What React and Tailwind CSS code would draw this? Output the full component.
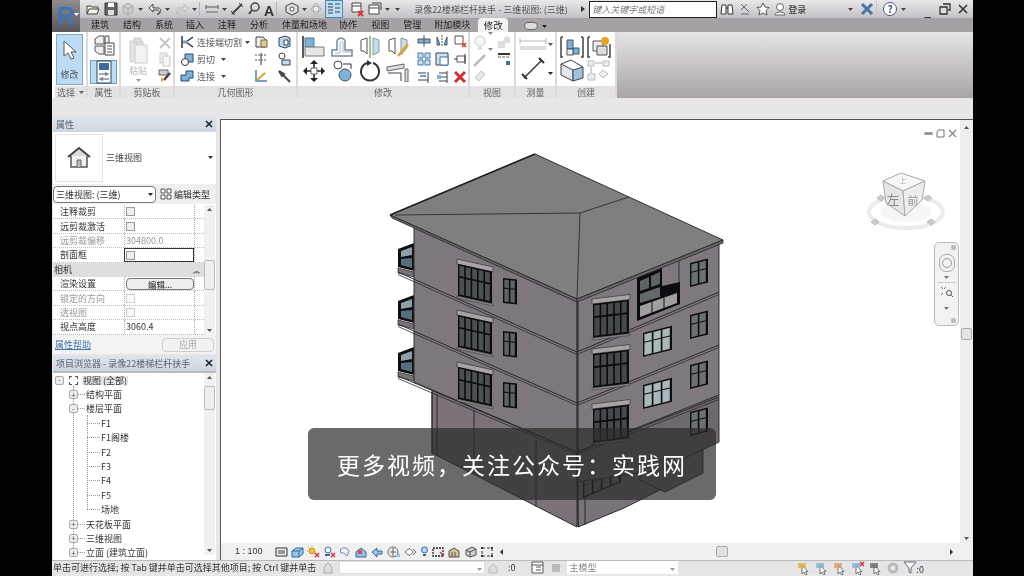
import React from 'react';

const FONT = { fontFamily: '"Noto Sans CJK SC", sans-serif' };

const S = ({ w = 16, h = 16, vb, children, className = '' }) => (
  <svg width={w} height={h} viewBox={vb || `0 0 ${w} ${h}`} className={`shrink-0 ${className}`} fill="none">
    {children}
  </svg>
);

const Caret = ({ c = '#444' }) => (
  <svg width="5" height="3" viewBox="0 0 5 3" className="shrink-0"><path d="M0 0h5L2.5 3z" fill={c} /></svg>
);

const CaretUp = ({ c = '#555' }) => (
  <svg width="5" height="3" viewBox="0 0 5 3" className="shrink-0"><path d="M0 3h5L2.5 0z" fill={c} /></svg>
);

// ---------- small icon drawings
const BLUE = '#7fb2d8', GRY = '#c9c9c9';
const I = {
  folder: <S><path d="M2 13V5h4l1 1h6v2M2 13l2-5h10l-2 5z" fill="#f0eee0" stroke="#444" /></S>,
  save: <S><path d="M2 2h12v12H2z" fill="#666" stroke="#333" /><path d="M5 2h6v4H5z" fill="#fff" /><path d="M5 9h6v5H5z" fill="#ddd" /></S>,
  sync: <S><path d="M8 2l5 3v6l-5 3-5-3V5z" fill="#ccc" stroke="#aaa" /><path d="M3 5l5 3 5-3M8 8v6" stroke="#aaa" /></S>,
  undo: <S><path d="M6 3L2 7l4 4V9h5c2 0 2 4 0 4h-1c5 0 5-6 1-6H6z" fill="#eee" stroke="#444" /></S>,
  redo: <S><path d="M10 3l4 4-4 4V9H5c-2 0-2 4 0 4h1c-5 0-5-6-1-6h5z" fill="#ddd" stroke="#bbb" /></S>,
  measure: <S><path d="M2 6h12M2 11h12" stroke="#999" strokeWidth="2" /><path d="M2 4v4M14 4v4" stroke="#555" /></S>,
  align: <S><path d="M3 13L13 3" stroke="#444" strokeWidth="2" /><path d="M2 10l4 4M10 2l4 4" stroke="#444" /></S>,
  tag: <S><circle cx="9" cy="6" r="4" stroke="#444" strokeWidth="1.5" /><path d="M6 9l-3 4" stroke="#444" strokeWidth="2" /></S>,
  A: <span className="w-4 text-center text-[14px] leading-4 font-bold text-[#333]" style={{ fontFamily: '"Liberation Sans"' }}>A</span>,
  house3d: <S><path d="M8 2l6 3v6l-6 3-6-3V5z" fill="#ddd" stroke="#444" /><circle cx="8" cy="8" r="2" fill="#fff" stroke="#555" /></S>,
  section: <S><path d="M8 2l5 6-5 6-5-6z" fill="#ddd" stroke="#aaa" /><circle cx="8" cy="8" r="3" fill="#eee" stroke="#aaa" /></S>,
  thin: <S><path d="M2 3h5M2 6h5M2 9h5M2 12h5M9 3h5M9 7h5M9 11h5" stroke="#345" /></S>,
  closeWin: <S><path d="M3 2h9v9H3z" fill="#fff" stroke="#444" /><path d="M3 5h9" stroke="#444" /><path d="M9 10l5 5m0-5l-5 5" stroke="#d33" strokeWidth="2" /></S>,
  switchWin: <S><path d="M2 4h10v9H2z" fill="#fff" stroke="#444" /><path d="M2 7h10" stroke="#444" /><path d="M5 2h9v7" stroke="#444" /></S>,
  cursor: <S w={18} h={22}><path d="M3 2v15l4-3 3 6 3-1-3-6h5z" fill="#fff" stroke="#555" /></S>,
  grid2: <S w={22} h={24}><path d="M2 6l4-3h5v8H2zM2 13h9v8H6l-4-3zM12 3h4v8h-4z" fill="#eee" stroke="#555" /><path d="M12 10h9v12h-9z" fill="#fff" stroke="#444" /><path d="M14 13h5M14 16h5M14 19h5" stroke="#456" /></S>,
  propsActive: <S w={20} h={24}><path d="M3 1h14v22H3z" fill="#fff" stroke="#345" /><path d="M5 3h10v7H5z" fill="#3e6ca0" /><path d="M5 14h10M5 19h10" stroke="#456" /><path d="M12 12v4M8 17v4" stroke="#456" /></S>,
  paste: <S w={20} h={28}><path d="M2 5h13v21H2z" fill="#e5e5e5" stroke="#ccc" /><path d="M6 2h7v5H6z" fill="#ddd" stroke="#ccc" /><path d="M7 9h12v18H7z" fill="#f2f2f2" stroke="#ccc" /></S>,
  cut: <S><path d="M3 3l10 10M13 3L3 13" stroke="#c6c6c6" strokeWidth="2" /></S>,
  copy: <S><path d="M3 2h7v10H3z" fill="#eee" stroke="#ccc" /><path d="M6 5h7v10H6z" fill="#f5f5f5" stroke="#ccc" /></S>,
  brush: <S><path d="M2 3h9v5H2z" fill="#ccc" stroke="#666" /><path d="M13 6l-6 7" stroke="#444" strokeWidth="2.5" /><path d="M4 10l3 3-3 2z" fill="#d9a428" /></S>,
  joinCut: <S w={14} h={14}><path d="M2 1v12" stroke="#333" strokeWidth="1.5" /><path d="M13 2L6 7l7 5" stroke="#333" strokeWidth="1.5" /><path d="M3 7h5" stroke="#6a9cc4" strokeWidth="3" /></S>,
  cutGeo: <S w={14} h={14}><path d="M5 2h8v8H5z" fill={BLUE} stroke="#346" /><circle cx="5" cy="10" r="3.5" fill="#fff" stroke="#333" /></S>,
  joinGeo: <S w={14} h={14}><path d="M6 2h7v7H9v3H1V6h5z" fill={BLUE} stroke="#346" /></S>,
  g1: <S w={14} h={14}><path d="M2 2h7l3 3v7H2z" fill="#eee" stroke="#444" /><path d="M7 5h6v7H7z" fill="#e8c88a" stroke="#765" /></S>,
  g2: <S w={14} h={14}><path d="M2 3l6-2 5 2v8l-5 2-6-2z" fill="#bcd6ea" stroke="#345" /><path d="M7 5h4v5H7z" fill="#fff" stroke="#345" /></S>,
  g3: <S w={14} h={14}><path d="M1 3h12M1 8h12" stroke="#555" strokeDasharray="2 1" /><path d="M7 1v12" stroke="#333" /></S>,
  g4: <S w={14} h={14}><circle cx="5" cy="4" r="3" fill="#fff" stroke="#444" /><path d="M5 8h8v5H5z" fill="#cde" stroke="#345" /></S>,
  g5: <S w={14} h={14}><path d="M2 1v11h11" stroke="#4c80b0" strokeWidth="1.5" /><path d="M3 11l8-7" stroke="#d9a428" strokeWidth="2" /></S>,
  g6: <S w={14} h={14}><path d="M2 2l5 3-2 2zM6 6l7 7" stroke="#444" strokeWidth="2" /></S>,
  alignBig: <S w={24} h={22}><path d="M1 0v22" stroke="#222" strokeWidth="1.5" /><path d="M3 2h9v9H3z" fill={BLUE} stroke="#578" /><path d="M3 11h19v9H3z" fill="#e6e6e6" stroke="#777" /></S>,
  offset: <S w={24} h={22}><path d="M2 20v-6h5V6c0-5 8-5 8 0v8h7v6z" fill="#fff" stroke="#789" strokeWidth="1.5" /><path d="M5 17h5V7c0-2 3-2 3 0v9h8" stroke="#9bb" /></S>,
  mirror1: <S w={24} h={22}><path d="M3 4l6-2v16l-3-3H3z" fill="#fff" stroke="#555" /><path d="M12 0v22" stroke="#8a6" strokeWidth="1.5" /><path d="M15 2l6 2v12l-6 3z" fill="#c8dcec" stroke="#89a" /></S>,
  mirror2: <S w={24} h={22}><path d="M3 4l6-2v16l-3-3H3z" fill="#fff" stroke="#555" /><path d="M15 2l6 2v8l-6 7z" fill="#c8dcec" stroke="#89a" /><path d="M12 20L22 8" stroke="#d9a428" strokeWidth="2.5" /></S>,
  move: <S w={24} h={22}><path d="M12 0l4 4H8zM12 22l-4-4h8zM1 11l4-4v8zM23 11l-4 4V7z" fill="#222" /><path d="M12 4v14M5 11h14" stroke="#222" strokeWidth="1.5" /><path d="M9 8h6v6H9z" fill="#fff" stroke="#666" /></S>,
  copyBig: <S w={24} h={22}><circle cx="8" cy="5" r="4" fill="#fff" stroke="#444" /><circle cx="15" cy="15" r="6" fill={BLUE} stroke="#456" /><path d="M13 4h8v5" stroke="#333" /></S>,
  rotate: <S w={24} h={22}><path d="M9 3a9 9 0 1 0 6 0" stroke="#333" strokeWidth="2" /><path d="M9 0l5 3-5 3z" fill="#333" /></S>,
  trim: <S w={24} h={22}><path d="M1 7l17-3v4L1 11zM19 9v13h3V9z" fill="#ddd" stroke="#666" /><path d="M2 13h13v8" stroke="#345" /></S>,
  s1: <S w={14} h={14}><path d="M1 5h12v4H1z" fill={BLUE} stroke="#456" /><path d="M7 1v12" stroke="#555" /></S>,
  s2: <S w={14} h={14}><path d="M2 3v8h3zM12 3v8H9z" fill={BLUE} stroke="#456" /><path d="M7 1v12" stroke="#555" strokeDasharray="2 1" /></S>,
  s3: <S w={14} h={14}><path d="M2 2h8v8H2z" stroke="#555" /><path d="M9 9l4 4m0-4l-4 4" stroke="#d33" strokeWidth="1.7" /></S>,
  s4: <S w={14} h={14}><path d="M1 1h5v5H1zM8 1h5v5H8zM1 8h5v5H1zM8 8h5v5H8z" fill="#cfe0ee" stroke="#3d72a5" /></S>,
  s5: <S w={14} h={14}><path d="M1 1h12v12H1z" fill="#cfe0ee" stroke="#345" /><path d="M5 5h8v8H5z" fill="#fff" stroke="#3d72a5" /></S>,
  s6: <S w={14} h={14}><path d="M4 4h8v6H4z" fill="#fff" stroke="#555" /><path d="M1 7h3M12 2v10" stroke="#333" /></S>,
  s7: <S w={14} h={14}><path d="M1 3h8M1 10h10M11 2v11" stroke="#345" /><path d="M3 6h6" stroke="#6a9cc4" strokeWidth="2" /></S>,
  s8: <S w={14} h={14}><path d="M4 3h8M2 7h10M4 11h8" stroke="#345" /><path d="M12 1v12" stroke="#345" /><path d="M2 5h4v4H2z" fill={BLUE} /></S>,
  del: <S w={14} h={14}><path d="M2 2l10 10m0-10L2 12" stroke="#d32f2f" strokeWidth="3" /></S>,
  bulb: <S w={14} h={16}><circle cx="7" cy="6" r="5" fill="#f5f5f5" stroke={GRY} /><path d="M5 12h4v3H5z" fill="#ddd" /></S>,
  vg: <S w={14} h={14}><path d="M1 6h7v7H1z" fill="#ddd" /><circle cx="10" cy="5" r="3.5" fill="#ddd" /></S>,
  pen: <S w={14} h={14}><path d="M1 13L12 2" stroke="#bbb" strokeWidth="2.5" /></S>,
  lines: <S w={14} h={14}><path d="M1 2h12" stroke="#333" strokeWidth="2" /><path d="M1 5h12" stroke="#666" strokeDasharray="3 1" /><path d="M9 9h4v4H9z" fill="#3d72a5" /></S>,
  roll: <S w={14} h={14}><path d="M2 9l6-7 4 3-6 7z" fill="#e6e6e6" stroke={GRY} /></S>,
  mLine: <S w={28} h={14}><path d="M1 4h26" stroke="#bbb" /><path d="M1 1v6M27 1v6" stroke="#bbb" /><path d="M1 9h26v4H1z" fill="#ddd" /></S>,
  mDiag: <S w={24} h={24}><path d="M3 21L21 3" stroke="#333" strokeWidth="1.5" /><path d="M1 17l5 5M18 1l5 5" stroke="#333" strokeWidth="2" /></S>,
  comp: <S w={24} h={22}><path d="M1 1H3M1 1v20h2M23 1h-2M23 1v20h-2" stroke="#444" strokeWidth="1.5" /><path d="M7 4h6v9H7zM13 12h6v6h-6z" fill={BLUE} stroke="#456" /><path d="M7 13h6v6H7z" fill="#eee" stroke="#456" /></S>,
  compSun: <S w={24} h={22}><path d="M1 1H3M1 1v20h2M23 8v13h-2" stroke="#444" strokeWidth="1.5" /><path d="M6 5h10v10H6z" fill="#eee" stroke="#555" /><path d="M10 10h10v9H10z" fill="#ddd" stroke="#555" /><circle cx="18" cy="5" r="4" fill="#e8a020" /></S>,
  parts: <S w={24} h={24}><path d="M1 5l12 6v11L1 16z" fill="#dfe8f0" stroke="#444" /><path d="M13 11l10-3v11l-10 3z" fill="#9fc3de" stroke="#444" /><path d="M1 5l10-4 12 7" stroke="#444" /></S>,
  assem: <S w={24} h={24}><path d="M1 2h6v5H1zM16 2h6v5h-6zM1 15h7v6H1zM16 11l5 4-5 4-4-4z" fill="#eee" stroke="#bbb" /><path d="M8 4h7M4 8v6" stroke="#aaa" /></S>,
};

// ---------- title bar
const quick = [
  ['folder', 5], ['save', 2], ['sync', 1], ['c', 2], ['undo', 4], ['c', 2], ['redo', 4], ['c', 2], ['sep', 2], ['measure', 1], ['c', 2],
  ['align', 2], ['tag', 1], ['A', 2], ['sep', 2], ['house3d', 4], ['c', 2], ['section', 1], ['thin', 0], ['closeWin', 6], ['switchWin', 2], ['c', 2], ['c', 5],
];

const TitleBar = () => (
  <div className="h-[18px] flex items-center bg-gradient-to-b from-[#e9e7e9] to-[#c4c2c6]">
    <div className="flex items-center shrink-0">
      {quick.map(([k, ml], i) => {
        if (k === 'c') return <div key={i} style={{ marginLeft: ml }}><Caret /></div>;
        if (k === 'sep') return <div key={i} className="w-px h-3.5 bg-[#b5b3b7]" style={{ marginLeft: ml, marginRight: 3 }} />;
        if (k === 'thin') return <div key={i} className="w-[18px] h-[18px] ml-[1px] flex items-center justify-center bg-[#bcdcf2] border border-[#4d87b5]">{I.thin}</div>;
        return <div key={i} style={{ marginLeft: ml }}>{I[k]}</div>;
      })}
    </div>
    <div className="ml-[14px] w-[150px] shrink-0 text-[9px] leading-none text-[#55535a] whitespace-nowrap">录像22楼梯栏杆扶手 - 三维视图: (三维)</div>
    <div className="ml-[17px] w-0 h-0 border-y-[3px] border-y-transparent border-l-[4px] border-l-[#333] shrink-0" />
    <div className="ml-[4px] w-[128px] shrink-0 h-[17px] bg-white border border-[#222] text-[9px] leading-[15px] italic pl-0.5 text-[#777] whitespace-nowrap overflow-hidden">键入关键字或短语</div>
    <div className="ml-[3px] flex items-center gap-[4px] shrink-0">
      <S w={14} h={14}><path d="M2 3h4v9H1zM8 3h4l1 9H8z" fill="#fff" stroke="#333" /><path d="M6 6h2" stroke="#333" /></S>
      <S w={14} h={14}><path d="M3 2l8 8M3 12h8M9 2L3 8" stroke="#666" /></S>
      <S w={14} h={14}><path d="M7 1l2 4 4 .5-3 3 1 4.5-4-2-4 2 1-4.5-3-3L5 5z" fill="#fff" stroke="#555" /></S>
      <S w={12} h={14}><circle cx="6" cy="5" r="3.500" fill="#fff" stroke="#666" /><path d="M1 13c0-4 10-4 10 0z" fill="#fff" stroke="#666" /></S>
    </div>
    <span className="ml-[2px] text-[9px] text-[#444] font-medium leading-none whitespace-nowrap shrink-0">登录</span>
    <div className="ml-[42px]"><Caret /></div>
    <div className="ml-[7px]"><S w={14} h={14}><path d="M2 2l10 10M12 2L2 12" stroke="#4a74a8" strokeWidth="3" /></S></div>
    <div className="ml-[2px] w-px h-4 bg-[#c8c6ca]" />
    <div className="ml-[6px] w-[14px] h-[14px] shrink-0 rounded-full border border-[#557] bg-white text-[10px] leading-[12px] text-center text-[#2f5c94] font-bold">?</div>
    <div className="ml-[4px]"><Caret /></div>
    <div className="ml-[18px] text-[12px] font-bold leading-none text-[#333] mt-1">_</div>
    <div className="ml-[8px]"><S w={12} h={12}><path d="M4 1h7v6H9M1 4h7v7H1z" fill="#ddd" stroke="#333" strokeWidth="1.3" /></S></div>
    <div className="ml-[5px] text-[#333]"><S w={14} h={14}><path d="M3 3l8 8M11 3l-8 8" stroke="#333" strokeWidth="1.6" /></S></div>
  </div>
);

// ---------- tabs
const tabs = [['建筑', 11], ['结构', 14], ['系统', 14], ['插入', 13], ['注释', 14], ['分析', 14], ['体量和场地', 14], ['协作', 12], ['视图', 14], ['管理', 14], ['附加模块', 13]];

const TabBar = () => (
  <div className="h-[14px] flex items-end bg-[#a6a1a5]">
    {tabs.map(([t, ml]) => (
      <span key={t} className="text-[9px] leading-[14px] text-[#222]" style={{ marginLeft: ml }}>{t}</span>
    ))}
    <div className="ml-[8px] w-[30px] h-[14px] bg-[#f4f3f4] rounded-t-sm text-center text-[9.5px] leading-[15px] text-[#222]">修改</div>
    <div className="ml-[16px] mb-[2px] flex items-center gap-1">
      <span className="w-[14px] h-[8px] rounded-sm bg-[#ddd] border border-[#666]" />
      <Caret c="#222" />
    </div>
  </div>
);

// ---------- ribbon
const Panel = ({ w, label, caret, children }) => (
  <div className="flex flex-col shrink-0 mr-[2px]" style={{ width: w }}>
    <div className="h-[54px] bg-white flex items-center">{children}</div>
    <div className="h-[12px] bg-[#e4e2e4] flex items-center justify-center gap-1 text-[9px] leading-none text-[#666]">
      {label}{caret && <Caret c="#666" />}
    </div>
  </div>
);

const Col = ({ className = '', children }) => <div className={`flex flex-col justify-between h-[48px] items-center ${className}`}>{children}</div>;

const GeoRow = ({ icon, text, w }) => (
  <div className="flex items-center gap-[2px]">
    {icon}
    <span className="text-[9px] leading-none text-[#555] whitespace-nowrap ml-[1px]" style={{ width: w }}>{text}</span>
    <Caret />
  </div>
);

const Ribbon = () => (
  <div className="flex h-[66px] bg-[#dcdadc]">
    <div className="w-[3px] bg-white" />
    <div className="flex flex-1">
      <Panel w={31} label="选择" caret>
        <div className="w-[27px] h-[51px] ml-[1px] bg-[#bcdcf3] border border-[#7da9cc] flex flex-col items-center pt-1">
          {I.cursor}
          <span className="mt-[9px] text-[9px] text-[#555] leading-none">修改</span>
        </div>
      </Panel>
      <Panel w={31} label="属性">
        <div className="flex flex-col items-center w-full gap-[3px] -mt-px">
          {I.grid2}
          <div className="w-[27px] h-[24px] bg-[#bcdcf3] border border-[#6e9fc6] flex justify-center items-center">{I.propsActive}</div>
        </div>
      </Panel>
      <Panel w={52} label="剪贴板">
        <div className="flex flex-col items-center ml-[7px]">
          {I.paste}
          <span className="text-[9px] mt-[2px] text-[#bbb] leading-none">粘贴</span>
          <div className="mt-1"><Caret c="#999" /></div>
        </div>
        <Col className="ml-[9px]">{I.cut}{I.copy}{I.brush}</Col>
      </Panel>
      <Panel w={121} label="几何图形">
        <Col className="ml-[5px] !items-start">
          <GeoRow icon={I.joinCut} text="连接端切割" w={46} />
          <GeoRow icon={I.cutGeo} text="剪切" w={22} />
          <GeoRow icon={I.joinGeo} text="连接" w={22} />
        </Col>
        <Col className="ml-[4px]">{I.g1}{I.g3}{I.g5}</Col>
        <Col className="ml-[9px]">{I.g2}{I.g4}{I.g6}</Col>
      </Panel>
      <Panel w={170} label="修改">
        <div className="grid grid-cols-4 gap-x-[4px] gap-y-[2px] ml-[4px]">
          {I.alignBig}{I.offset}{I.mirror1}{I.mirror2}
          {I.move}{I.copyBig}{I.rotate}{I.trim}
        </div>
        <div className="grid grid-cols-3 gap-x-[4px] gap-y-[4px] ml-[7px]">
          {I.s1}{I.s2}{I.s3}{I.s4}{I.s5}{I.s6}{I.s7}{I.s8}{I.del}
        </div>
      </Panel>
      <Panel w={44} label="视图">
        <Col className="ml-[3px]">{I.bulb}{I.pen}{I.roll}</Col>
        <Col className="ml-[1px] !justify-start gap-[13px] mt-[-6px]"><Caret c="#888" /><Caret c="#888" /></Col>
        <Col className="ml-[4px] !justify-start gap-[3px]">{I.vg}{I.lines}</Col>
      </Panel>
      <Panel w={39} label="测量">
        <div className="flex flex-col items-center gap-[6px] ml-[3px]">
          {I.mLine}
          {I.mDiag}
        </div>
        <div className="flex flex-col gap-[26px] ml-[1px]"><Caret c="#555" /><Caret c="#222" /></div>
      </Panel>
      <Panel w={58} label="创建">
        <div className="grid grid-cols-2 gap-x-[3px] gap-y-[1px] ml-[3px]">{I.comp}{I.compSun}{I.parts}{I.assem}</div>
      </Panel>
      <div className="flex-1 bg-gradient-to-b from-[#e6e4e6] to-[#a9a4a8]" />
    </div>
  </div>
);

// ---------- properties panel
const PanelHead = ({ text }) => (
  <div className="h-[16px] flex items-center justify-between px-[3px] bg-gradient-to-b from-[#dfe5ec] to-[#cdd6e0] text-[9px] leading-none text-[#5a6470]">
    {text}
    <S w={8} h={8}><path d="M1 1l6 6M7 1L1 7" stroke="#222" strokeWidth="1.6" /></S>
  </div>
);

const Check = ({ dim }) => <span className={`block w-[9px] h-[9px] border ${dim ? 'border-[#ccc] bg-[#fafafa]' : 'border-[#999] bg-[#eee]'}`} />;

const rows = [
  { k: '注释裁剪', v: <Check /> },
  { k: '远剪裁激活', v: <Check /> },
  { k: '远剪裁偏移', v: <span className="text-[#999]">304800.0</span>, dim: true },
  { k: '剖面框', v: <Check />, sel: true },
  { head: '相机' },
  { k: '渲染设置', v: <div className="w-[68px] h-[12px] rounded-sm border border-[#777] bg-[#eee] text-center text-[8.5px] leading-[10px] text-[#222]">编辑...</div> },
  { k: '锁定的方向', v: <Check dim />, dim: true },
  { k: '透视图', v: <Check dim />, dim: true },
  { k: '视点高度', v: <span className="text-[#333]">3060.4</span> },
];

const ScrollBar = ({ h, thumbTop, thumbH, className = '' }) => (
  <div className={`relative w-[11px] bg-[#f2f1f2] ${className}`} style={{ height: h }}>
    <div className="absolute top-[3px] left-[3px]"><CaretUp /></div>
    <div className="absolute left-0 w-[11px] rounded-[2px] bg-[#eeeeee] border border-[#bbb]" style={{ top: thumbTop, height: thumbH }} />
    <div className="absolute bottom-[3px] left-[3px]"><Caret c="#555" /></div>
  </div>
);

const Properties = () => (
  <div className="h-[238px] flex flex-col">
    <PanelHead text="属性" />
    <div className="h-[52px] bg-white flex items-center relative">
      <div className="w-[48px] h-[48px] ml-[2px] border border-[#e4e4e4] bg-white flex items-center justify-center">
        <S w={26} h={26}><path d="M2 12L13 3l11 9" stroke="#444" strokeWidth="2" fill="#ddd" /><path d="M5 11v11h16V11" fill="#f2f2f2" stroke="#555" strokeWidth="1.5" /><path d="M11 22v-7h4v7" fill="#bbb" stroke="#666" /></S>
      </div>
      <span className="ml-[3px] text-[9px] text-[#444]">三维视图</span>
      <div className="absolute right-[3px] top-[24px]"><Caret c="#333" /></div>
    </div>
    <div className="h-[20px] flex items-center bg-[#f0eff0]">
      <div className="w-[103px] h-[17px] rounded-sm border border-[#777] bg-white flex items-center justify-between px-[2px] text-[9px] text-[#333] leading-none">
        三维视图: (三维) <Caret c="#222" />
      </div>
      <div className="ml-[4px]"><S w={12} h={12}><path d="M1 1h4v4H1zM7 1h4v4H7zM1 7h4v4H1zM7 7h4v4H7z" fill="#fff" stroke="#555" /></S></div>
      <span className="ml-[2px] text-[9px] text-[#333] leading-none whitespace-nowrap">编辑类型</span>
    </div>
    <div className="flex h-[131px] bg-white pt-px">
      <div className="w-[151px]">
        {rows.map((r) =>
          r.head ? (
            <div key={r.head} className="h-[14.4px] bg-[#dfdedf] text-[9px] leading-[14px] text-[#333] pl-px flex justify-between pr-[4px]">
              {r.head}<span className="text-[7px]">︽</span>
            </div>
          ) : (
            <div key={r.k} className="h-[14.4px] flex border-b border-dotted border-[#bbb] text-[9px] leading-none">
              <div className={`w-[71px] pl-[7px] flex items-center ${r.dim ? 'text-[#999]' : 'text-[#333]'}`}>{r.k}</div>
              <div className={`w-[70px] pl-px flex items-center border-l border-dotted border-[#aaa] ${r.sel ? 'outline outline-1 outline-[#333] -outline-offset-1 h-[14px]' : ''}`}>{r.v}</div>
              <div className="w-[10px] border-l border-dotted border-[#aaa]" />
            </div>
          ),
        )}
      </div>
      <ScrollBar h={130} thumbTop={55} thumbH={30} />
    </div>
    <div className="flex-1 bg-[#f3f2f3] flex items-center justify-between pl-[2px] pr-[2px]">
      <span className="text-[9px] text-[#3f74b0] underline leading-none">属性帮助</span>
      <div className="w-[52px] h-[14px] rounded-sm border border-[#ccc] text-center text-[9px] leading-[12px] text-[#aaa]">应用</div>
    </div>
  </div>
);

// ---------- project browser
const Box = ({ plus }) => (
  <span className="w-[9px] h-[9px] rounded-[2px] border border-[#aaa] bg-[#eee] flex items-center justify-center text-[8px] leading-none text-[#555] shrink-0">
    {plus ? '+' : '-'}
  </span>
);

const tree = [
  { t: '视图 (全部)', root: true },
  { t: '结构平面', l: 1, plus: true },
  { t: '楼层平面', l: 1 },
  { t: 'F1', l: 2 }, { t: 'F1阁楼', l: 2 }, { t: 'F2', l: 2 }, { t: 'F3', l: 2 }, { t: 'F4', l: 2 }, { t: 'F5', l: 2 }, { t: '场地', l: 2 },
  { t: '天花板平面', l: 1, plus: true },
  { t: '三维视图', l: 1, plus: true },
  { t: '立面 (建筑立面)', l: 1, plus: true },
];

const Browser = () => (
  <div className="flex-1 flex flex-col mt-[1px] min-h-0">
    <PanelHead text="项目浏览器 - 录像22楼梯栏杆扶手" />
    <div className="flex-1 bg-white border-t-2 border-[#bbb] flex min-h-0">
      <div className="relative w-[151px] overflow-hidden">
        <span className="absolute left-[20px] top-[13px] h-[170px] border-l border-dotted border-[#999]" />
        <span className="absolute left-[34px] top-[42px] h-[94px] border-l border-dotted border-[#999]" />
        {tree.map((n) => (
          <div key={n.t} className="relative h-[14.4px] flex items-center text-[9px] leading-none text-[#333] whitespace-nowrap">
            {n.root && (
              <>
                <span className="ml-[2px]"><Box /></span>
                <span className="ml-[5px] w-[9px] h-[9px] border border-dashed border-[#555]" />
                <span className="ml-[4px] bg-[#e5e5e5] px-px">{n.t}</span>
              </>
            )}
            {n.l === 1 && (
              <>
                <span className="ml-[16px]"><Box plus={n.plus} /></span>
                <span className="w-[7px] border-t border-dotted border-[#999]" />
                <span className="ml-[1px]">{n.t}</span>
              </>
            )}
            {n.l === 2 && (
              <>
                <span className="ml-[34px] w-[13px] border-t border-dotted border-[#999]" />
                <span className="ml-[1px]">{n.t}</span>
              </>
            )}
          </div>
        ))}
      </div>
      <ScrollBar h={182} thumbTop={13} thumbH={24} />
    </div>
  </div>
);

// ---------- building
const para = (x, y, w, h, s, u0 = 0, v0 = 0) =>
  `${x + u0},${y + s * u0 + v0} ${x + u0 + w},${y + s * (u0 + w) + v0} ${x + u0 + w},${y + s * (u0 + w) + v0 + h} ${x + u0},${y + s * u0 + v0 + h}`;

const Win = ({ x, y, w, h, s, cols, fill }) => {
  const cw = (w - 2) / cols;
  return (
    <g>
      <polygon points={para(x, y, w, h, s)} fill="#0c0c0e" />
      {Array.from({ length: cols }).map((_, i) => (
        <g key={i}>
          <polygon points={para(x, y, cw - 1.6, h * 0.32, s, 1.4 + i * cw, 1.5)} fill={fill} />
          <polygon points={para(x, y, cw - 1.6, h * 0.52, s, 1.4 + i * cw, h * 0.42)} fill={fill} />
        </g>
      ))}
    </g>
  );
};

const Bay = ({ x, y, w, h, s, fill }) => (
  <g>
    <polygon points={para(x - 1, y - 4, w + 2, 5, s)} fill="#a8a3a6" stroke="#333" strokeWidth=".7" />
    <Win x={x} y={y + 1} w={w} h={h} s={s} cols={5} fill={fill} />
    <polygon points={para(x - 1, y + h + 1, w + 2, 2, s)} fill="#888" stroke="#333" strokeWidth=".5" />
  </g>
);

const Band = ({ a, b }) => (
  <g>
    <line x1={a[0]} y1={a[1]} x2={b[0]} y2={b[1]} stroke="#2a2a2d" strokeWidth="1" />
    <line x1={a[0]} y1={a[1] + 2.5} x2={b[0]} y2={b[1] + 2.5} stroke="#2a2a2d" strokeWidth=".8" />
  </g>
);

const Building = () => (
  <svg width="739" height="422" viewBox="221 120 739 422" fill="none" className="absolute inset-0">
    {/* lower floor */}
    <polygon points="432,390 577,452 577,527 432,453" fill="#7a7278" stroke="#2a2a2d" />
    <polygon points="577,450 660,420 660,490 624,508 578,527" fill="#79727a" stroke="#2a2a2d" />
    <polygon points="640,430 703,410 703,473 665,492 640,480" fill="#76707a" stroke="#2a2a2d" />
    <path d="M474 410v64M536 440v67M585 455v70M432 392v62M437 394v62" stroke="#2a2a2d" />
    <Win x={583} y={478} w={38} h={20} s={-0.42} cols={4} fill="#6c7074" />
    <Win x={628} y={431} w={32} h={30} s={-0.3} cols={3} fill="#55595e" />

    {/* balconies */}
    {[243, 295, 347].map((y) => (
      <g key={y}>
        <polygon points={`398,${y + 6} 414,${y} 414,${y + 28} 398,${y + 24}`} fill="#0e0e10" />
        <polygon points={`401,${y + 8} 412,${y + 4} 412,${y + 12} 401,${y + 14}`} fill="#8fa0a8" />
        <polygon points={`401,${y + 16} 412,${y + 15} 412,${y + 25} 401,${y + 22}`} fill="#55707c" />
        <polygon points={`398,${y + 25} 414,${y + 29} 414,${y + 34} 398,${y + 30}`} fill="#77727a" stroke="#222" strokeWidth=".7" />
      </g>
    ))}

    {/* walls */}
    <polygon points="414,226 577,299 577,452 414,382" fill="#7f777e" stroke="#333" />
    <polygon points="577,299 719,240 719,395 577,452" fill="#80787f" stroke="#333" />
    <polygon points="577,452 719,395 719,442 660,470 577,482" fill="#6f696f" stroke="#333" />
    <Band a={[398, 272]} b={[577, 352]} />
    <Band a={[398, 324]} b={[577, 403]} />
    <Band a={[398, 376]} b={[577, 452]} />
    <Band a={[577, 352]} b={[719, 292]} />
    <Band a={[577, 403]} b={[719, 345]} />
    <Band a={[577, 452]} b={[719, 397]} />
    <line x1="578" y1="299" x2="578" y2="527" stroke="#222" />
    <line x1="679" y1="257" x2="679" y2="305" stroke="#333" />

    {/* left windows */}
    {[263, 314, 366].map((y) => <Bay key={y} x={458} y={y} w={34} h={32} s={0.22} fill="#4c5056" />)}
    {[278, 331, 382].map((y) => <Win key={y} x={503} y={y} w={14} h={25} s={0.1} cols={2} fill="#5f6368" />)}

    {/* right windows */}
    {[303, 353, 408].map((y) => <Bay key={y} x={593} y={y} w={36} h={34} s={-0.12} fill="#45484d" />)}
    <polygon points="637,278 662,268 662,286 680,282 680,304 637,321" fill="#0c0c0e" />
    <polygon points="640,281 649,277 649,288 640,291" fill="#5c6266" />
    <polygon points="651,276 660,272 660,284 651,287" fill="#5c6266" />
    <polygon points="640,294 660,287 660,297 640,303" fill="#63686c" />
    <polygon points="640,306 677,293 677,303 640,317" fill="#a09ea0" />
    <path d="M652 302v11M664 298v10" stroke="#111" />
    {[[643, 333], [643, 385]].map(([x, y]) => <Win key={y} x={x} y={y} w={29} h={24} s={-0.25} cols={3} fill="#a8b8bb" />)}
    {[[690, 263], [690, 315], [690, 365], [690, 412]].map(([x, y]) => <Win key={y} x={x} y={y} w={18} h={24} s={-0.25} cols={2} fill="#6a7075" />)}

    {/* roof */}
    <polygon points="535,154 723,240 577,299 390,215" fill="#807f80" stroke="#333" strokeWidth="1" />
    <polygon points="390,215 577,299 577,302 392,218" fill="#6a6a6c" stroke="#222" strokeWidth=".8" />
    <polygon points="577,299 723,240 723,243 577,302" fill="#6a6a6c" stroke="#222" strokeWidth=".8" />
    <line x1="390" y1="215" x2="535" y2="154" stroke="#222" strokeWidth="1.6" />
    <path d="M395 215L580 213L629 197M580 213L577 298" stroke="#2e2e30" strokeWidth=".9" />
  </svg>
);

// ---------- view cube and nav bar
const Flower = ({ x, y }) => <path d={`M${x - 4} ${y}l4-3 4 3-4 3z`} fill="#ccc" stroke="#bbb" />;

const ViewCube = () => (
  <div className="absolute left-[645px] top-[50px]">
    <svg width="84" height="66" viewBox="0 0 84 66" fill="none">
      <ellipse cx="40" cy="42" rx="37" ry="16" stroke="#ececec" strokeWidth="4" />
      <ellipse cx="40" cy="42" rx="26" ry="10" fill="#f6f6f6" />
      <Flower x={9} y={52} />
      <Flower x={65} y={52} />
      <Flower x={15} y={28} />
      <Flower x={62} y={28} />
      <path d="M17 11l18-8 24 8-22 10z" fill="#f7f7f7" stroke="#aaa" />
      <path d="M17 11l20 10 2 25-19-13z" fill="#e6e6e6" stroke="#aaa" />
      <path d="M37 21l22-10-3 19-17 16z" fill="#eeeeee" stroke="#aaa" />
      <text x="27" y="34" fontSize="13" fill="#888" textAnchor="middle" style={FONT}>左</text>
      <text x="47" y="35" fontSize="11" fill="#999" textAnchor="middle" style={FONT}>前</text>
      <text x="37" y="13" fontSize="7" fill="#aaa" textAnchor="middle" style={FONT}>上</text>
    </svg>
  </div>
);

const NavBar = () => (
  <div className="absolute left-[713px] top-[122px] w-[25px] h-[84px] rounded-[5px] border border-[#bbb] bg-[#f2f2f2] flex flex-col items-center">
    <span className="mt-[2px] ml-[14px] w-[5px] h-[5px] rounded-full bg-[#bbb]" />
    <span className="mt-[4px] w-[16px] h-[18px] rounded-[7px] border border-[#aaa] flex items-center justify-center">
      <span className="w-[10px] h-[10px] rounded-full border border-[#999]" />
    </span>
    <div className="mt-[4px]"><Caret c="#777" /></div>
    <span className="mt-[3px] w-[18px] border-t border-[#ccc]" />
    <div className="mt-[3px]"><S w={14} h={12}><path d="M1 1l2 2M1 9l2-2M6 1L4 3" stroke="#777" /><circle cx="9" cy="7" r="2.5" stroke="#556" /><path d="M11 9l2 2" stroke="#556" /></S></div>
    <div className="mt-[9px]"><Caret c="#777" /></div>
    <span className="mt-auto mb-[2px] ml-[14px] w-[5px] h-[5px] rounded-full bg-[#bbb]" />
  </div>
);

// ---------- bars
const X = ({ x = 8, y = 7 }) => <path d={`M${x} ${y}l4 4m0-4l-4 4`} stroke="#d33" strokeWidth="1.5" />;

const viewIcons = [
  <S w={13} h={12} key="a"><path d="M1 2h11v8H1z" fill="#eee" stroke="#333" /><path d="M3 4h7v4H3z" fill="#999" /></S>,
  <S w={13} h={12} key="b"><path d="M1 5l4-3h7v6l-4 3H1z" fill="#9cc4e4" stroke="#2f6aa5" /><path d="M1 5h7v6M8 5l4-3" stroke="#2f6aa5" /></S>,
  <S w={13} h={12} key="c"><circle cx="5" cy="5" r="3" fill="#f0c040" stroke="#c89820" /><path d="M5 0v1M0 5h1M1.5 1.5l1 1" stroke="#c89820" /><X /></S>,
  <S w={13} h={12} key="d"><circle cx="5" cy="4" r="3" fill="#fff" stroke="#2f6aa5" /><path d="M2 9h5" stroke="#2f6aa5" strokeWidth="2" /><X /></S>,
  <S w={13} h={12} key="e"><path d="M1 4c3-3 7-3 9 1l-2 5-3-3H2z" fill="#eef" stroke="#6a8ca8" /></S>,
  <S w={13} h={12} key="f"><path d="M1 6l5-4 5 4v5H1z" fill="#9cc4e4" stroke="#2f6aa5" /><X x={3} y={4} /></S>,
  <S w={13} h={12} key="g"><path d="M1 6l5-4v3h5v3H6v3z" fill="#9cc4e4" stroke="#2f6aa5" /></S>,
  <S w={14} h={12} key="h"><circle cx="6" cy="6" r="5" fill="#eee" stroke="#666" /><path d="M3 6h6M6 2v8" stroke="#666" /><path d="M9 8h4v3H9z" fill="#9cc4e4" /></S>,
  <S w={13} h={12} key="i"><path d="M1 6c3-4 6-4 8 0-2 4-5 4-8 0z" fill="#fff" stroke="#667" /><path d="M9 3l3 3-3 3" stroke="#667" /></S>,
  <S w={9} h={12} key="j"><circle cx="4.5" cy="4" r="3" fill="#bcd8f0" stroke="#2f6aa5" /><path d="M3 8h3v2H3z" fill="#2f6aa5" /></S>,
  <S w={13} h={12} key="k"><path d="M1 2h10v8H1z" stroke="#222" strokeWidth="1.3" strokeDasharray="2 1" /><path d="M8 6l4 4" stroke="#a44" strokeWidth="1.5" /></S>,
  <S w={13} h={12} key="l"><path d="M1 5l5-3 5 3v6H1z" fill="#d8c090" stroke="#555" /><path d="M4 6v5M7 6v5" stroke="#555" /></S>,
  <S w={13} h={12} key="m"><path d="M2 4l6-3 4 2v6l-6 2-4-2z" fill="#ccc" stroke="#555" /><path d="M2 4l4 2 6-3M6 6v5" stroke="#555" /></S>,
  <S w={14} h={12} key="n"><path d="M2 2h10v8H2z" stroke="#333" strokeDasharray="3 2" /><path d="M1 1h2v2H1zM11 1h2v2h-2zM1 9h2v2H1zM11 9h2v2h-2z" fill="#333" /></S>,
];

const StatusIco = ({ c, children }) => (
  <S w={14} h={14}>
    <path d="M5 4v9l2-2 1.5 3 1.5-.7L8.600 10.500H11z" fill="#fff" stroke="#555" strokeWidth=".8" />
    <path d="M1 2h8v5H1z" fill={c} opacity=".75" />
    {children}
  </S>
);

const StatusBar = () => (
  <div className="h-[14px] mb-[2px] flex items-center bg-[#e6e4e6] border-t border-[#bbb] text-[9px] leading-none text-[#333]">
    <span className="w-[265px] pl-px whitespace-nowrap">单击可进行选择; 按 Tab 键并单击可选择其他项目; 按 Ctrl 键并单击</span>
    <div className="ml-[4px]"><S w={14} h={12}><path d="M3 11V5l4-4 4 4v6z" fill="#ddd" stroke="#aaa" /></S></div>
    <div className="ml-[4px] w-[146px] h-[13px] bg-white border border-[#ddd] relative"><div className="absolute right-[2px] top-[6px]"><Caret c="#999" /></div></div>
    <div className="ml-[2px]"><S w={12} h={12}><path d="M2 11V6l4-4 4 4v5z" fill="#ddd" stroke="#bbb" /></S></div>
    <span className="ml-[9px]">:0</span>
    <div className="ml-[15px]"><S w={13} h={13}><path d="M1 1h11v11H1z" fill="#fff" stroke="#555" /><path d="M1 4h11M5 6h5M5 9h5" stroke="#555" /></S></div>
    <div className="ml-[6px]"><S w={12} h={12}><path d="M2 2h8v8H2z" fill="#bbb" /></S></div>
    <div className="ml-[5px] w-[111px] h-[13px] bg-white relative pl-[3px] text-[#888] leading-[13px]">主模型<div className="absolute right-[3px] top-[7px]"><Caret c="#999" /></div></div>
    <div className="ml-[119px] flex items-center gap-[4px]">
      <StatusIco c="#e0b030" />
      <StatusIco c="#7fb2d8" />
      <StatusIco c="#e09a60" />
      <StatusIco c="#7fb2d8"><path d="M9 1l4 4m0-4l-4 4" stroke="#d33" strokeWidth="1.5" /></StatusIco>
      <StatusIco c="#666" />
      <S w={12} h={12}><circle cx="6" cy="6" r="4" stroke="#bbb" strokeWidth="3" /></S>
      <div className="flex items-end">
        <S w={14} h={13}><path d="M1 1h12L8 7v5l-2-1V7z" fill="#fff" stroke="#667" /></S>
        <span className="text-[9px]">:0</span>
      </div>
    </div>
  </div>
);

const Canvas = () => (
  <div className="flex-1 min-w-0 h-[441px] mt-[3px] ml-[4px] flex flex-col bg-white border-l border-t border-[#555]">
    <div className="flex-1 flex min-h-0">
      <div className="relative flex-1 overflow-hidden">
        <Building />
        <ViewCube />
        <NavBar />
        <div className="absolute top-[9px] right-[3px] flex items-center gap-[3px]">
          <span className="w-[9px] h-[3px] rounded-full bg-[#999]" />
          <S w={9} h={9}><path d="M2 1h6v7H1V3z" fill="#fff" stroke="#777" /></S>
          <S w={9} h={9}><path d="M1 1l7 7M8 1L1 8" stroke="#888" strokeWidth="1.4" /></S>
        </div>
        <div className="absolute left-[87px] top-[308px] w-[408px] h-[72px] rounded-md bg-[#2b2b2b]/70 flex items-center justify-center text-white text-[23px] tracking-[2px] leading-none">
          更多视频，关注公众号：实践网
        </div>
      </div>
      <div className="relative w-[13px] bg-[#efedef] shrink-0">
        <div className="absolute top-[6px] left-[4px]"><CaretUp /></div>
        <div className="absolute top-[208px] left-px w-[11px] h-[12px] bg-[#e4e4e4] border border-[#aaa] rounded-[2px]" />
        <div className="absolute bottom-[3px] left-[4px]"><Caret c="#555" /></div>
      </div>
    </div>
    <div className="h-[17px] flex items-center bg-[#f1f0f1] shrink-0">
      <span className="ml-[14px] text-[9px] text-[#333] leading-none" style={{ fontFamily: '"Liberation Sans"' }}>1 : 100</span>
      <div className="flex items-center gap-[3px] ml-[12px]">{viewIcons}</div>
      <div className="ml-[6px] w-0 h-0 border-y-[3px] border-y-transparent border-r-[3px] border-r-[#333]" />
      <div className="relative flex-1 h-full ml-[4px]">
        <div className="absolute left-[209px] top-[3px] w-[12px] h-[11px] bg-[#e2e2e2] border border-[#aaa] rounded-[2px]" />
        <div className="absolute right-[20px] top-[6px] w-0 h-0 border-y-[3px] border-y-transparent border-l-[3px] border-l-[#333]" />
      </div>
    </div>
  </div>
);

export default function App() {
  return (
    <div className="w-[1024px] h-[576px] bg-black flex overflow-hidden blur-[0.4px]" style={FONT}>
      <div className="w-[921px] ml-[52px] flex flex-col bg-[#e9e6e9]">
        <div className="flex">
          <div className="w-[28px] h-[32px] bg-gradient-to-b from-[#8f8d8f] to-[#59575a] flex items-center justify-center shrink-0 relative">
            <span className="text-[#3f74b8] text-[25px] font-bold leading-none" style={{ fontFamily: '"Liberation Sans"' }}>R</span>
            <div className="absolute right-[1px] top-[13px]"><Caret c="#fff" /></div>
          </div>
          <div className="flex-1 min-w-0">
            <TitleBar />
            <TabBar />
          </div>
        </div>
        <Ribbon />
        <div className="h-[18px] shrink-0" />
        <div className="flex flex-1 min-h-0">
          <div className="w-[163px] ml-px flex flex-col shrink-0">
            <Properties />
            <Browser />
          </div>
          <Canvas />
        </div>
        <StatusBar />
      </div>
    </div>
  );
}
